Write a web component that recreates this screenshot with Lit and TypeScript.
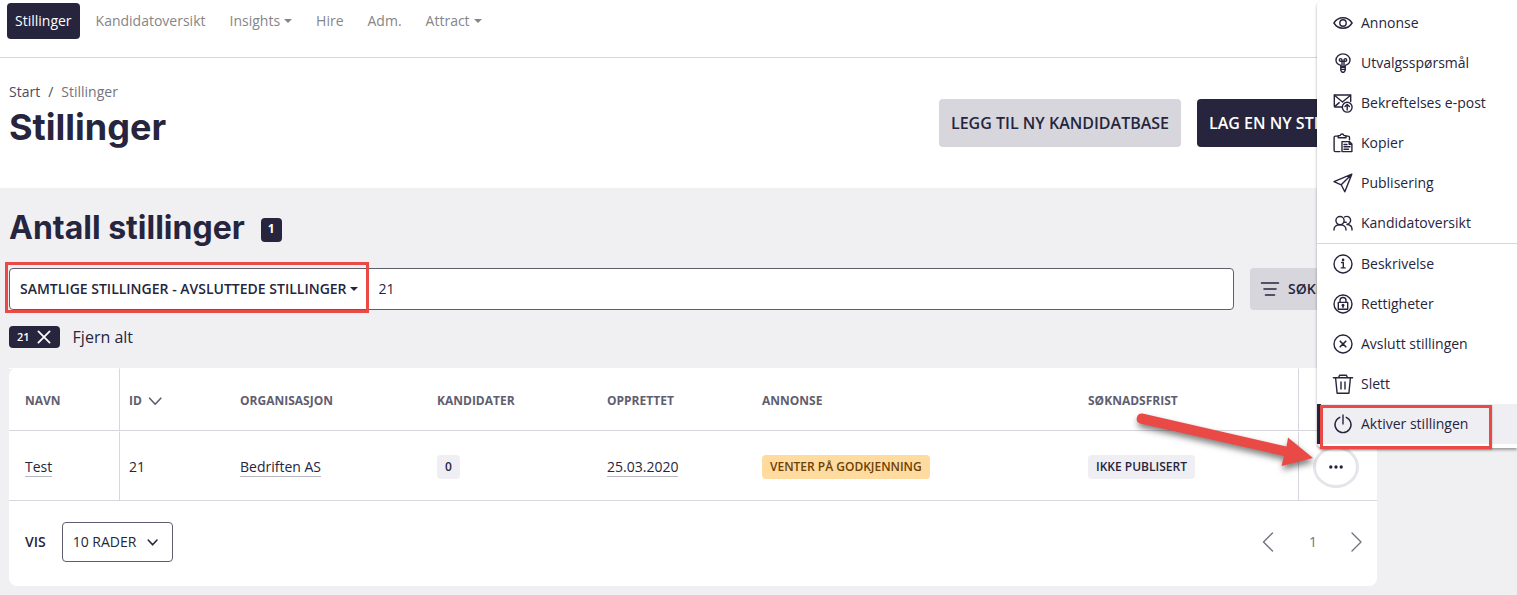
import { LitElement, html, css, svg, nothing } from "lit";
import { customElement, property } from "lit/decorators.js";

const icons: Record<string, unknown> = {
  eye: svg`<path d="M.9 10C3 6.700 6.300 4.800 10 4.800s7 1.900 9.100 5.200c-2.100 3.300-5.400 5.200-9.100 5.200S3 13.300.9 10z"/><circle cx="10" cy="10" r="3.200"/>`,
  bulb: svg`<path d="M7.800 14v-1.600C5 11.400 3 9.500 3 7.200 3 3.600 6.200.9 10 .9s7 2.700 7 6.300c0 2.300-2 4.200-4.800 5.200V14z"/><path d="M9 13.500V8.200M11 13.500V8.200M9 8.200H7.600a1.300 1.300 0 1 1 1.300-1.300zM11 8.200h1.400a1.300 1.300 0 1 0-1.300-1.300zM9 8.200h2"/><path d="M7.800 14.200h4.400v3.200l-1.200 1.800H9l-1.200-1.800zM7.800 16.400h4.400"/>`,
  mail: svg`<path d="M9.500 14H2.200a.9.900 0 0 1-.9-.9V2h16.400v6.500"/><path d="M1.500 2.200 9.500 9l8-6.800M1.600 13.600l4.600-4"/><circle cx="14.200" cy="14.200" r="4.900"/><path d="M14.200 17v-5.300M12 13.600l2.200-2.200 2.200 2.200"/>`,
  copy: svg`<path d="M7 18.600H2.400a1.300 1.300 0 0 1-1.300-1.300V4.400a1.300 1.300 0 0 1 1.300-1.300h2.800M13 3.100h2.200a1.300 1.300 0 0 1 1.300 1.300v2.400"/><path d="M5.200 4.800V2.600h2c.3-1 1-1.600 1.900-1.600s1.600.6 1.900 1.600h2v2.200z"/><path d="M9 8.600h7.400l2.500 2.400v7.600H9zM16.200 8.800v2.400h2.500M11 11.500h3M11 13.800h6M11 16.200h4.500"/>`,
  send: svg`<path d="M18.800 1.200 1 8.600l7.200 3.200 3.600 7zM18.800 1.200 8.200 11.800"/>`,
  people: svg`<circle cx="7" cy="7.600" r="4.100"/><path d="M1 17v-.6c0-2.700 2.500-4.700 6-4.700s6 2 6 4.700v.6"/><path d="M11.400 4c.7-.4 1.300-.6 2-.6a3.900 3.900 0 0 1 .6 7.800M14 11.500c3 .2 5 2.100 5 4.700v.8M11.200 9.300h2"/>`,
  info: svg`<circle cx="10" cy="10" r="9"/><path d="M8.600 8.500h1.700v5.200M8.300 13.900h3.800"/><circle cx="10.100" cy="5.900" r=".6" fill="currentColor"/>`,
  lock: svg`<circle cx="10" cy="10" r="9"/><rect x="5.300" y="8.400" width="9.400" height="6.900"/><path d="M7 8.200V6.500a3 3 0 0 1 6 0v1.700"/><circle cx="10" cy="11.200" r=".8"/><path d="M10 11.800v1.800"/>`,
  cancel: svg`<circle cx="10" cy="10" r="9"/><path d="m7.200 7.200 5.600 5.600M12.800 7.200l-5.600 5.600" stroke-width="1.600"/>`,
  trash: svg`<path d="M.4 3.700h19.200M5.600 3.500l1-2.200h6.800l1 2.200M2.600 4l1.500 15.200h11.800L17.400 4"/><path d="M8 8v7M12 8v7"/>`,
  power: svg`<path d="M6.800 3.300a8 8 0 1 0 6.400 0"/><path d="M10 1v9"/>`,
  down: svg`<path d="m4 7.500 5.500 6 5.500-6" stroke-width="2"/>`,
  sort: svg`<path d="m2 6.500 7 7.500L16 6.500" stroke-width="2"/>`,
  left: svg`<path d="M13.500 1 4.500 10l9 9"/>`,
  right: svg`<path d="m5 1 9 9-9 9"/>`,
  close: svg`<path d="m3 3 14 14M17 3 3 17" stroke-width="2.200"/>`,
  filter: svg`<path d="M1.500 4h17M4 10h12M5.500 16h9" stroke-width="1.600"/>`,
  dots: svg`<g fill="currentColor" stroke="none"><circle cx="3.500" cy="10" r="2.100"/><circle cx="10" cy="10" r="2.100"/><circle cx="16.500" cy="10" r="2.100"/></g>`,
};

@customElement("ui-icon")
class UiIcon extends LitElement {
  @property() name = "";
  static styles = css`
    :host { display: inline-flex; width: 20px; height: 20px; flex: none; }
    svg { width: 100%; height: 100%; overflow: visible; fill: none; stroke: currentColor; stroke-width: 1.400; stroke-linejoin: round; stroke-linecap: round; }
  `;
  render() {
    return html`<svg viewBox="0 0 20 20" aria-hidden="true">${icons[this.name] ?? nothing}</svg>`;
  }
}

const nav = [
  { label: "Stillinger", active: true },
  { label: "Kandidatoversikt" },
  { label: "Insights", menu: true },
  { label: "Hire" },
  { label: "Adm." },
  { label: "Attract", menu: true },
];

const actions = [
  [
    ["eye", "Annonse"],
    ["bulb", "Utvalgsspørsmål"],
    ["mail", "Bekreftelses e-post"],
    ["copy", "Kopier"],
    ["send", "Publisering"],
    ["people", "Kandidatoversikt"],
  ],
  [
    ["info", "Beskrivelse"],
    ["lock", "Rettigheter"],
    ["cancel", "Avslutt stillingen"],
    ["trash", "Slett"],
    ["power", "Aktiver stillingen"],
  ],
];

@customElement("app-root")
class AppRoot extends LitElement {
  static styles = css`
    * { box-sizing: border-box; }
    :host {
      display: block; position: relative; min-height: 100vh; overflow: hidden;
      background: #f0f0f3; color: #26253d;
      font: 400 14px/20px "Open Sans", "Noto Sans", sans-serif;
    }
    a { color: inherit; text-decoration: none; }
    button, input, select { font: inherit; color: inherit; margin: 0; border: 0; background: none; padding: 0; }
    button { cursor: pointer; }
    h1, h2 { margin: 0; font: 700 36px/50px Inter, sans-serif; }

    .nav { display: flex; gap: 8px; height: 58px; padding: 3px 7px; background: #fff; border-bottom: 1px solid #d6d6d6; }
    .nav-link { display: flex; align-items: center; gap: 4px; height: 36px; padding: 0 8px; border-radius: 4px; color: #858587; }
    .nav-link.active { background: #26253d; color: #fff; font-weight: 500; }
    .caret { width: 0; border: 4px solid transparent; border-top-color: currentColor; border-bottom: 0; }

    .head { display: flex; align-items: center; justify-content: space-between; padding: 24px 140px 24px 9px; background: #fff; }
    .crumbs { display: flex; gap: 8px; color: #4c4b5c; }
    .crumbs .here { color: #737380; }
    h1 { margin-bottom: 12px; }
    .head-actions { display: flex; gap: 16px; }
    .btn { height: 48px; padding: 0 12px; border-radius: 4px; background: #d7d6dd; font-size: 16px; font-weight: 600; white-space: nowrap; }
    .btn.primary { background: #26253d; color: #fff; }

    .main { padding: 20px 140px 9px 9px; }
    .count { display: flex; align-items: center; gap: 16px; margin-bottom: 20px; }
    h2 { font-size: 32px; line-height: 40px; }
    .count-badge { height: 24px; padding: 0 7px; margin-top: 4px; border-radius: 4px; background: #26253d; color: #fff; font-size: 12px; line-height: 22px; font-weight: 700; }

    .search { display: flex; gap: 16px; }
    .search-box { display: flex; flex: 1; height: 42px; border: 1px solid #5f5e70; border-radius: 4px; background: #fff; }
    .scope-wrap { position: relative; display: flex; }
    .scope { display: flex; align-items: center; gap: 3px; padding: 0 10px; font-weight: 600; white-space: nowrap; }
    .query { flex: 1; min-width: 0; padding: 0 11px; outline: 0; }
    .filter { display: flex; align-items: center; gap: 8px; width: 127px; padding: 0 10px; border-radius: 4px; background: #d7d6dd; font-weight: 600; }

    .chips { display: flex; align-items: center; gap: 13px; margin: 16px 0 20px; height: 22px; }
    .chip { display: flex; align-items: center; gap: 6px; height: 22px; padding: 0 8px; border-radius: 4px; background: #26253d; color: #fff; font-size: 11px; font-weight: 600; }
    .chip ui-icon { width: 16px; height: 16px; }
    .clear { font-size: 16px; }

    .card { background: #fff; border-radius: 8px; }
    table { width: 100%; table-layout: fixed; border-collapse: separate; border-spacing: 0; }
    th, td { padding: 2px 9px 0 10px; text-align: left; border: 0 solid #d7d6dd; border-top: 1px solid #fff; border-bottom-width: 1px; white-space: nowrap; }
    th { height: 63px; font-size: 12px; font-weight: 700; color: #5f5e70; }
    td { height: 70px; }
    th:first-child, td:first-child { padding-left: 16px; border-right-width: 1px; border-right-color: #d7d6dd; }
    th:nth-child(2), td:nth-child(2) { padding-left: 9px; }
    th:last-child, td:last-child { padding: 1px 14px 0; border-left-width: 1px; }
    .c-name { width: 111px; } .c-id { width: 110px; } .c-org { width: 197px; } .c-cand { width: 170px; }
    .c-date { width: 155px; } .c-ad { width: 326px; } .c-due { width: 220px; } .c-act { width: 79px; }
    .sort { display: flex; align-items: center; gap: 6px; font-weight: 700; }
    .sort ui-icon { width: 16px; height: 16px; }
    .link { border-bottom: 1px solid #b9b8c2; }
    .tag { display: inline-block; padding: 0 8px; border-radius: 4px; background: #efeef3; font-size: 12px; line-height: 24px; font-weight: 600; }
    .tag.wait { background: #ffdba0; color: #6b4206; }
    .more-wrap { position: relative; display: flex; }
    .more { display: grid; place-items: center; width: 46px; height: 42px; border: 3px solid #e5e4ea; border-radius: 50%; background: #fff; }
    .more ui-icon { width: 16px; height: 16px; }

    .foot { display: flex; align-items: center; gap: 16px; padding: 21px 10px 24px 16px; }
    .foot label { font-weight: 600; }
    .rows { position: relative; display: flex; }
    .rows select { appearance: none; width: 111px; height: 40px; padding: 0 10px; border: 1px solid #5f5e70; border-radius: 4px; background: #fff; }
    .rows ui-icon { position: absolute; right: 12px; top: 12px; width: 16px; height: 16px; pointer-events: none; }
    .pager { display: flex; align-items: center; gap: 30px; margin-left: auto; color: #737380; }
    .pager button { display: flex; }

    .menu { position: absolute; z-index: 2; top: 0; right: 0; width: 200px; padding: 3px 0 4px; background: #fff; border-radius: 6px 0 0 6px; box-shadow: 0 2px 3px rgba(0, 0, 0, .35); }
    .group + .group { border-top: 1px solid #d6d6da; }
    .item { position: relative; display: flex; align-items: center; gap: 8px; width: 100%; height: 40px; padding-left: 16px; text-align: left; white-space: nowrap; }
    .item.current { background: #efeef3; box-shadow: inset 4px 0 #26253d; }

    .mark { position: absolute; border: 3px solid #ea4a46; pointer-events: none; }
    .mark-scope { inset: -7px -1px -4px -5px; }
    .mark-item { inset: 1px 25px -5px 3px; box-shadow: 0 1px 2px rgba(0, 0, 0, .25); }
    .arrow { position: absolute; right: 50px; bottom: 11px; width: 180px; height: 64px; overflow: visible; pointer-events: none; fill: #ea4a46; filter: drop-shadow(1px 4px 3px rgba(0, 0, 0, .5)); }
  `;

  private renderNav() {
    return html`<nav class="nav">
      ${nav.map(n => html`<a href="#" class="nav-link ${n.active ? "active" : ""}">${n.label}${n.menu ? html`<span class="caret"></span>` : nothing}</a>`)}
    </nav>`;
  }

  private renderTable() {
    return html`<table>
      <colgroup>
        <col class="c-name"><col class="c-id"><col class="c-org"><col class="c-cand">
        <col class="c-date"><col class="c-ad"><col class="c-due"><col class="c-act">
      </colgroup>
      <thead>
        <tr>
          <th>NAVN</th>
          <th><button class="sort">ID <ui-icon name="sort"></ui-icon></button></th>
          <th>ORGANISASJON</th><th>KANDIDATER</th><th>OPPRETTET</th><th>ANNONSE</th><th>SØKNADSFRIST</th><th></th>
        </tr>
      </thead>
      <tbody>
        <tr>
          <td><a class="link" href="#">Test</a></td>
          <td>21</td>
          <td><a class="link" href="#">Bedriften AS</a></td>
          <td><span class="tag">0</span></td>
          <td><a class="link" href="#">25.03.2020</a></td>
          <td><span class="tag wait">VENTER PÅ GODKJENNING</span></td>
          <td><span class="tag">IKKE PUBLISERT</span></td>
          <td>
            <div class="more-wrap">
              <button class="more" aria-label="Flere valg"><ui-icon name="dots"></ui-icon></button>
              <svg class="arrow" viewBox="0 0 180 64" aria-hidden="true">
                <path d="M9.500 .6 153.500 33.500 155 24.500 180 45 148.500 53 151 43 7 10.600A5.200 5.200 0 0 1 9.500 .6z"/>
              </svg>
            </div>
          </td>
        </tr>
      </tbody>
    </table>`;
  }

  private renderMenu() {
    return html`<div class="menu" role="menu">
      ${actions.map(g => html`<div class="group">
        ${g.map(([icon, label]) => {
          const current = icon === "power";
          return html`<button role="menuitem" class="item ${current ? "current" : ""}"><ui-icon name=${icon}></ui-icon>${label}${current ? html`<span class="mark mark-item"></span>` : nothing}</button>`;
        })}
      </div>`)}
    </div>`;
  }

  render() {
    return html`
      ${this.renderNav()}
      <header class="head">
        <div>
          <div class="crumbs"><a href="#">Start</a><span>/</span><span class="here">Stillinger</span></div>
          <h1>Stillinger</h1>
        </div>
        <div class="head-actions">
          <button class="btn">LEGG TIL NY KANDIDATBASE</button>
          <button class="btn primary">LAG EN NY STILLING</button>
        </div>
      </header>
      <main class="main">
        <div class="count"><h2>Antall stillinger</h2><span class="count-badge">1</span></div>
        <div class="search">
          <div class="search-box">
            <div class="scope-wrap">
              <button class="scope">SAMTLIGE STILLINGER - AVSLUTTEDE STILLINGER<span class="caret"></span></button>
              <span class="mark mark-scope"></span>
            </div>
            <input class="query" type="text" aria-label="Søk" value="21">
          </div>
          <button class="filter"><ui-icon name="filter"></ui-icon>SØKEFILTER</button>
        </div>
        <div class="chips">
          <button class="chip">21<ui-icon name="close"></ui-icon></button>
          <button class="clear">Fjern alt</button>
        </div>
        <section class="card">
          ${this.renderTable()}
          <div class="foot">
            <label for="rows">VIS</label>
            <div class="rows">
              <select id="rows"><option>10 RADER</option></select>
              <ui-icon name="down"></ui-icon>
            </div>
            <div class="pager">
              <button aria-label="Forrige"><ui-icon name="left"></ui-icon></button>
              <span>1</span>
              <button aria-label="Neste"><ui-icon name="right"></ui-icon></button>
            </div>
          </div>
        </section>
      </main>
      ${this.renderMenu()}
    `;
  }
}
